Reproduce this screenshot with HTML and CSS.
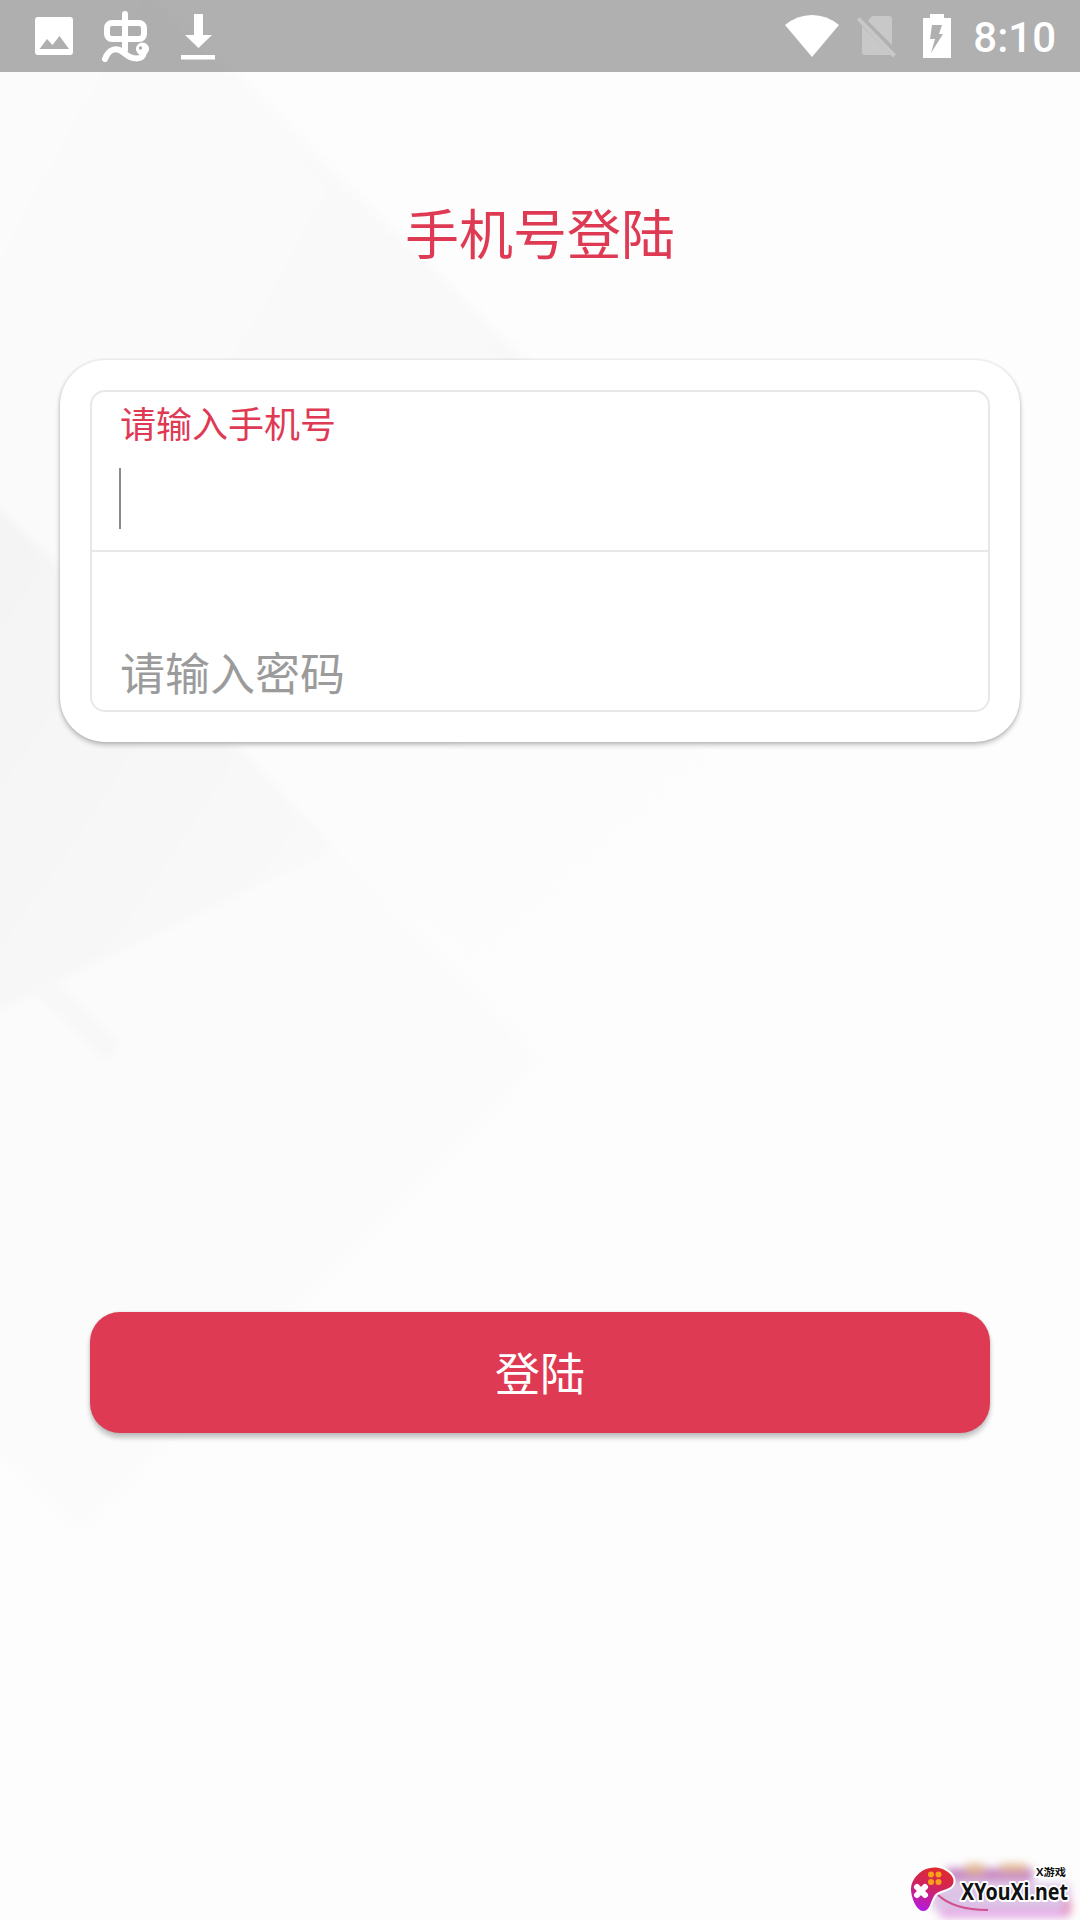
FILE: index.html
```html
<!DOCTYPE html>
<html lang="zh-CN">
  <head>
    <meta charset="UTF-8" />
    <title>手机号登陆</title>
    <link rel="stylesheet" href="styles.css">
  </head>
  <body>
    <!-- Faint folded paper background -->
    <svg class="backdrop" viewBox="0 0 1080 1920" aria-hidden="true">
      <defs>
        <linearGradient id="fold" x1="0" y1="0" x2="1" y2="1">
          <stop offset="0" stop-color="#fbfbfb" />
          <stop offset="1" stop-color="#f7f7f7" />
        </linearGradient>
        <linearGradient id="shade" x1="0" y1="0" x2="1" y2="1">
          <stop offset="0" stop-color="#f3f3f3" />
          <stop offset="1" stop-color="#fafafa" />
        </linearGradient>
      </defs>
      <path d="M-40 -40H120L535 370V700L-40 1000z" fill="url(#fold)" />
      <path d="M-40 740H720L475 960L400 900L-40 1200z" fill="#fcfcfc" />
      <path d="M-40 470L230 740L335 848L60 980L-40 1030z" fill="url(#shade)" />
      <path d="M335 848L540 1060L80 1530L-40 1420V1030L60 980z" fill="#fbfbfb" />
      <path d="M25 985L60 985L120 1045L108 1062z" fill="#f8f8f8" />
    </svg>

    <header class="status-bar">
      <div class="status-left">
        <svg class="icon-image" viewBox="0 0 38 38">
          <path fill-rule="evenodd" d="M3 0H35Q38 0 38 3V35Q38 38 35 38H3Q0 38 0 35V3Q0 0 3 0zM4.500 32H34L24.500 19L17.500 28L12 22z" />
        </svg>
        <svg class="icon-bug" viewBox="0 0 48 52">
          <g fill="none" stroke="#fff" stroke-width="6" stroke-linecap="round" stroke-linejoin="round">
            <rect x="5" y="12" width="37" height="16" rx="5" />
            <path d="M23 3V39" />
            <path d="M3 48C7 37 15 36 22 42C30 49 41 50 42 41" />
          </g>
          <circle cx="40.500" cy="38" r="6.500" />
          <circle cx="38.500" cy="37" r="1.700" fill="#aaa" />
        </svg>
        <svg class="icon-download" viewBox="0 0 34 46">
          <path d="M13 0H22V21H31L17.500 34L4 21H13zM0 41H34V45.500H0z" />
        </svg>
      </div>
      <div class="status-right">
        <svg class="icon-wifi" viewBox="0 0 54 42">
          <path d="M0 10Q12 0 27 0T54 10L27 42z" />
        </svg>
        <svg class="icon-sim" viewBox="0 0 40 42">
          <path d="M15 0H32Q35 0 35 3V29L11 5zM6 11L34 39H8Q5 39 5 36V10z" />
          <path d="M2.500 1L39 38.500L36 41.500L0 4z" />
        </svg>
        <svg class="icon-battery" viewBox="0 0 28 44">
          <path fill-rule="evenodd" d="M7 0H21V4H28V44H0V4H7zM9 11H19L16 20H20L8 39L12 25H7z" />
        </svg>
        <span class="clock">8:10</span>
      </div>
    </header>

    <main class="login">
      <h1 class="title">手机号登陆</h1>
      <form class="login-form">
        <div class="card">
          <div class="fields">
            <div class="field field-active">
              <span class="label">请输入手机号</span>
              <span class="caret"></span>
            </div>
            <div class="field field-empty">
              <span class="hint">请输入密码</span>
            </div>
          </div>
        </div>
        <button class="submit" type="button">登陆</button>
      </form>
    </main>

    <div class="watermark">
      <svg class="watermark-art" viewBox="0 0 200 80">
        <defs>
          <linearGradient id="pad" x1="0.600" y1="0" x2="0.300" y2="1">
            <stop offset="0" stop-color="#e02b2b" />
            <stop offset="0.450" stop-color="#d02360" />
            <stop offset="1" stop-color="#b51be0" />
          </linearGradient>
          <filter id="soft" x="-30%" y="-50%" width="160%" height="200%">
            <feGaussianBlur stdDeviation="4.500" />
          </filter>
        </defs>
        <g filter="url(#soft)">
          <path d="M66 28H153V42H66z" fill="#c78bc4" />
          <path d="M86 24H104V34H86zM120 24H146V32H120z" fill="#e3b68e" />
          <path d="M52 44H190V70H52z" fill="#dcc3e6" />
          <path d="M60 70H188V78H60z" fill="#e7a9e6" />
          <path d="M184 60H191V74H184z" fill="#e08ab0" />
        </g>
        <path d="M57 54Q73 70 108 70" fill="none" stroke="#d0508d" stroke-width="2" />
        <path d="M50 28C60 25 77 34 73 44C70 51 58 49 54 56C50 63 50 71 43 71C37 71 31 58 31 49C31 40 39 30 50 28z" fill="url(#pad)" stroke="#fff" stroke-width="4" paint-order="stroke" />
        <path d="M37 47L45 55M45 47L37 55" stroke="#fff" stroke-width="6" stroke-linecap="round" />
        <g fill="#f9a11b">
          <circle cx="51" cy="34.500" r="3" />
          <circle cx="58.500" cy="34.500" r="3" />
          <circle cx="51" cy="42" r="3" />
          <circle cx="58.500" cy="42" r="3" />
        </g>
        <text class="mark-small" x="156" y="36" textLength="30" lengthAdjust="spacingAndGlyphs">X游戏</text>
        <text class="mark-large" x="81" y="60" textLength="107" lengthAdjust="spacingAndGlyphs">XYouXi.net</text>
      </svg>
    </div>
  </body>
</html>
```

FILE: styles.css
```css
* {
  box-sizing: border-box;
}
body {
  position: relative;
  height: 1920px;
  margin: 0;
  overflow: hidden;
  background-color: #fdfdfd;
  font-family: Roboto, "Noto Sans CJK SC", sans-serif;
}
svg {
  display: block;
  overflow: visible;
  fill: #fff;
}
.backdrop {
  position: absolute;
  top: 0;
  left: 0;
  width: 1080px;
  height: 1920px;
  z-index: -1;
  filter: blur(5px);
}

/* Status bar */
.status-bar {
  display: flex;
  justify-content: space-between;
  height: 72px;
  padding: 0 24px 0 35px;
  background-color: rgba(0, 0, 0, 0.3);
}
.status-left,
.status-right {
  display: flex;
  align-items: center;
}
.icon-image {
  width: 38px;
  height: 38px;
}
.icon-bug {
  width: 48px;
  height: 52px;
  margin: 2px 0 0 29px;
}
.icon-download {
  width: 34px;
  height: 46px;
  margin: 1px 0 0 31px;
}
.icon-wifi {
  width: 54px;
  height: 42px;
  margin-bottom: 1px;
}
.icon-sim {
  width: 40px;
  height: 42px;
  margin: 2px 0 0 18px;
  opacity: 0.3;
}
.icon-battery {
  width: 28px;
  height: 44px;
  margin-left: 26px;
}
.clock {
  margin-left: 22px;
  padding-top: 3px;
  color: #fff;
  font-size: 42px;
  font-weight: 500;
  line-height: 69px;
}

/* Login form */
.login {
  padding: 125px 60px 0;
}
.title {
  margin: 0;
  color: #df3a53;
  font-size: 54px;
  font-weight: 400;
  line-height: 80px;
  text-align: center;
}
.card {
  margin-top: 83px;
  padding: 30px;
  border-radius: 45px;
  background-color: #fff;
  box-shadow: 0 3px 5px rgba(0, 0, 0, 0.24), 0 0 3px rgba(0, 0, 0, 0.14);
}
.fields {
  border: 2px solid #e8e8e8;
  border-radius: 15px;
}
.field {
  display: flex;
  flex-direction: column;
  height: 158px;
  padding: 0 28px;
}
.field-active {
  height: 160px;
  padding-top: 10px;
  border-bottom: 2px solid #e8e8e8;
}
.field-empty {
  justify-content: flex-end;
  padding-bottom: 4px;
}
.label {
  color: #df3a53;
  font-size: 36px;
  line-height: 48px;
}
.caret {
  width: 2px;
  height: 61px;
  margin: 18px 0 0 -1px;
  background-color: #8a8a8a;
}
.hint {
  color: #9b9b9b;
  font-size: 45px;
  line-height: 60px;
}
.submit {
  display: block;
  width: 900px;
  height: 121px;
  margin: 570px auto 0;
  padding: 0 0 3px;
  border: none;
  border-radius: 30px;
  background-color: #df3a53;
  box-shadow: 0 5px 5px rgba(0, 0, 0, 0.22), 0 0 3px rgba(0, 0, 0, 0.12);
  color: #fff;
  font-family: inherit;
  font-size: 45px;
}

/* Site mark over the bottom right corner */
.watermark {
  position: absolute;
  right: 0;
  bottom: 0;
  width: 200px;
  height: 80px;
}
.watermark text {
  fill: #111;
  stroke: #fff;
  stroke-width: 4px;
  stroke-linejoin: round;
  paint-order: stroke;
}
.mark-small {
  font-family: "Open Sans", "Noto Sans CJK SC", sans-serif;
  font-size: 10px;
  font-weight: 700;
}
.mark-large {
  font-family: "Noto Sans", sans-serif;
  font-size: 23.5px;
  font-weight: 700;
}
```
